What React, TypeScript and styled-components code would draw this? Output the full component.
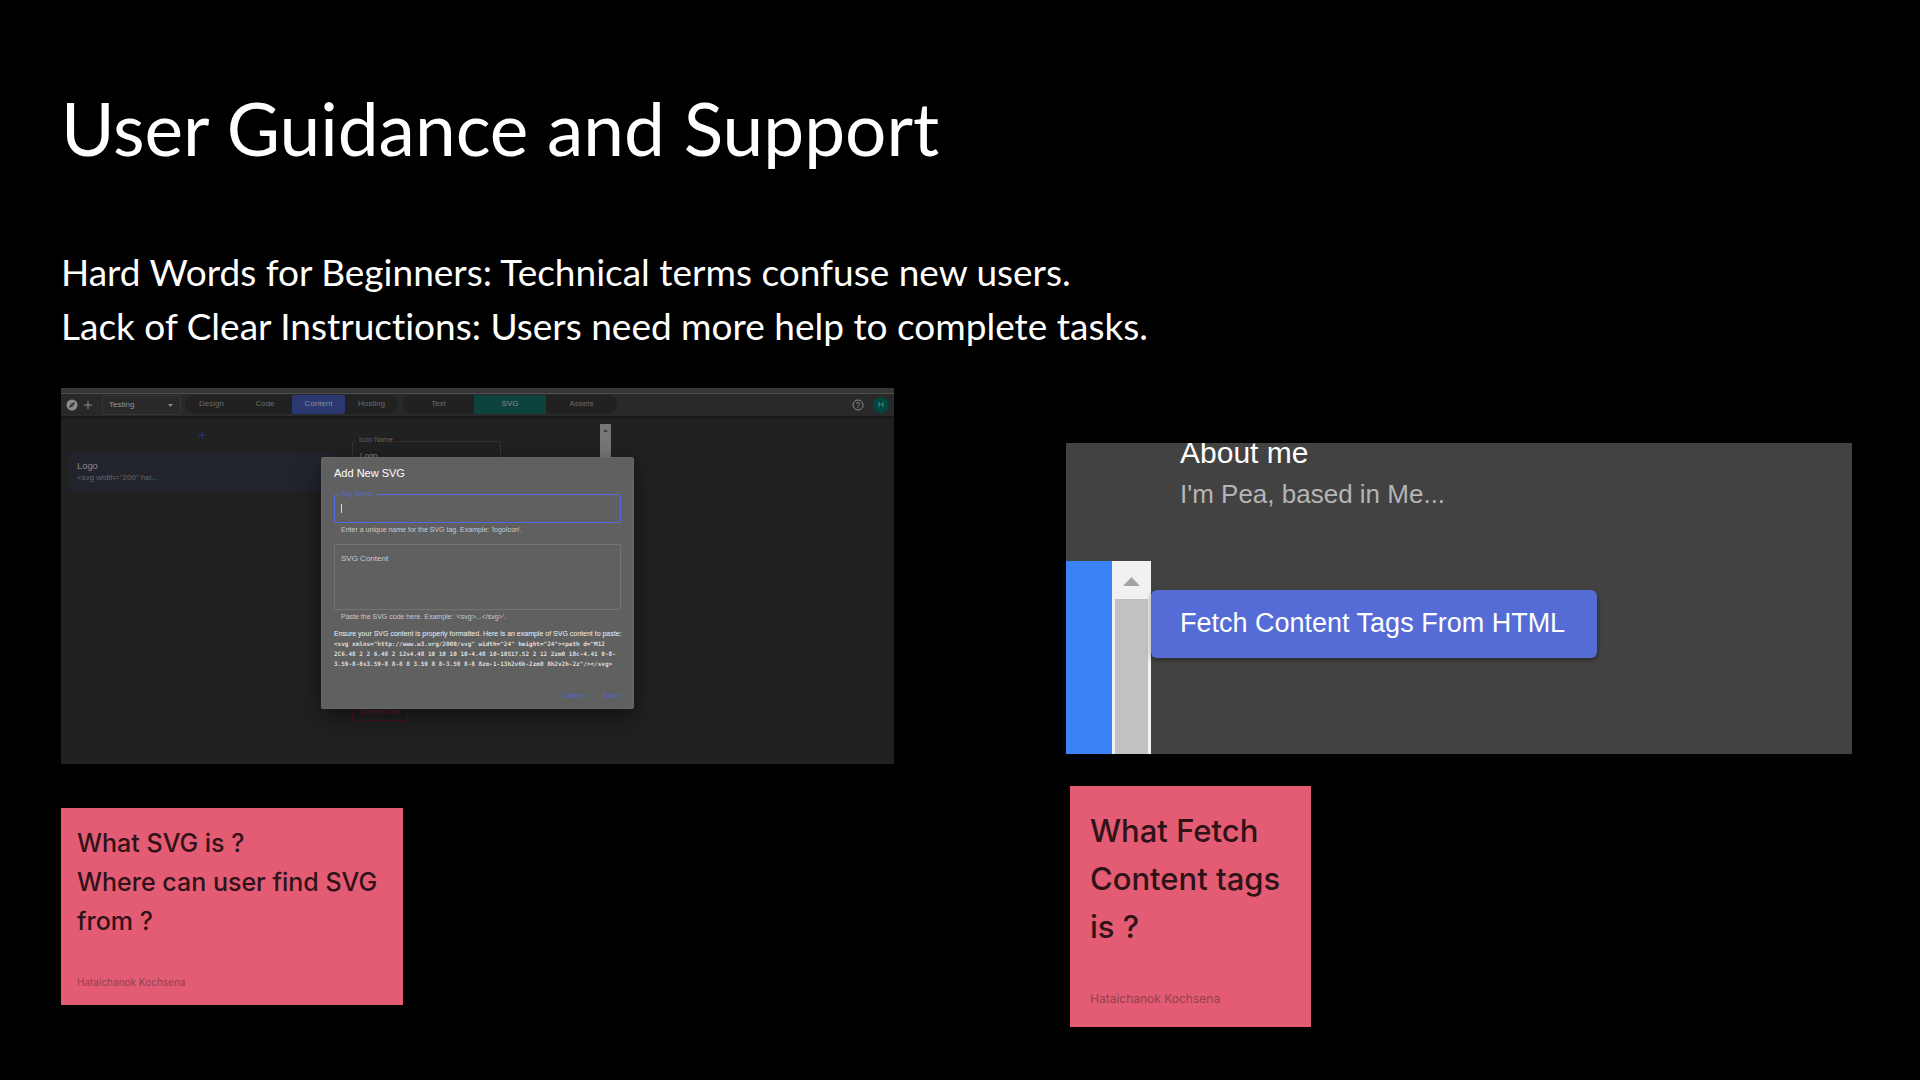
import React from "react";
import styled, { createGlobalStyle } from "styled-components";

const GlobalStyle = createGlobalStyle`
  *, *::before, *::after { box-sizing: border-box; }
  body { margin: 0; background: #000; }
  h1, h2, h3, p { margin: 0; font-weight: 400; }
  button, input, select, textarea { font: inherit; margin: 0; }
`;

const sans = '"Liberation Sans", Arial, sans-serif';

const Slide = styled.main`
  min-height: 100vh;
  padding: 84px 68px 48px 61px;
  background: #000;
  color: #fff;
  font-family: Inter, sans-serif;
`;

const Title = styled.h1`
  font-family: Lato, sans-serif;
  font-size: 73px;
  line-height: 88px;
`;

const Findings = styled.div`
  margin-top: 73px;
  font-family: Lato, sans-serif;
  font-size: 37px;
  font-variant-ligatures: none;
  line-height: 54px;
`;

const Columns = styled.div`
  display: grid;
  grid-template-columns: 833fr 786fr;
  column-gap: 172px;
  align-items: start;
  margin-top: 35px;
`;

const Column = styled.section<{ $top: number; $gap: number }>`
  display: flex;
  flex-direction: column;
  gap: ${(p) => p.$gap}px;
  padding-top: ${(p) => p.$top}px;
`;

const Note = styled.article<{ $large?: boolean }>`
  display: flex;
  flex-direction: column;
  justify-content: space-between;
  width: ${(p) => (p.$large ? 241 : 342)}px;
  min-height: ${(p) => (p.$large ? 241 : 197)}px;
  margin-left: ${(p) => (p.$large ? 4 : 0)}px;
  padding: ${(p) => (p.$large ? "21px 20px 20px" : "16px 16px 15px")};
  background: #e35c73;
  color: #301219;
  font-size: ${(p) => (p.$large ? 31 : 25)}px;
  font-weight: 500;
  line-height: ${(p) => (p.$large ? 48 : 39)}px;

  p {
    font-weight: inherit;
  }
`;

const Author = styled.footer<{ $large?: boolean }>`
  color: #933f4e;
  font-size: ${(p) => (p.$large ? 12 : 10)}px;
  font-weight: 400;
  line-height: 16px;
`;

/* Website builder preview */

const Builder = styled.div`
  position: relative;
  aspect-ratio: 833 / 376;
  overflow: hidden;
  background: #212121;
  color: #858585;
  font-family: ${sans};
  font-size: 8px;
  line-height: 12px;
`;

const WindowEdge = styled.div`
  height: 6px;
  background: #373737;
  border-bottom: 1px solid #565656;
`;

const Toolbar = styled.header`
  display: flex;
  align-items: center;
  height: 22px;
  padding: 0 5px;
  background: #292929;
  box-shadow: 0 1px 3px rgba(0, 0, 0, 0.5);
`;

const IconButton = styled.button`
  display: grid;
  place-items: center;
  width: 12px;
  height: 12px;
  margin-right: 4px;
  padding: 0;
  border: 0;
  background: none;
  color: #8c8c8c;
`;

const ProjectSelect = styled.div`
  position: relative;
  width: 79px;
  height: 20px;
  margin: 0 4px 0 4px;

  select {
    width: 100%;
    height: 100%;
    padding: 0 6px;
    appearance: none;
    border: 1px solid #363636;
    border-radius: 2px;
    background: transparent;
    color: #959595;
  }

  svg {
    position: absolute;
    right: 8px;
    top: 9px;
  }
`;

const TabGroup = styled.nav`
  display: flex;
  height: 19px;
  margin: 0 5px 2px 0;
  overflow: hidden;
  border-radius: 10px;
  background: #212121;
`;

const Tab = styled.button<{ $width: number; $fill?: string }>`
  width: ${(p) => p.$width}px;
  padding: 0;
  border: 0;
  border-radius: ${(p) => (p.$width < 60 ? 2 : 0)}px;
  background: ${(p) => p.$fill ?? "transparent"};
  color: ${(p) => (p.$fill ? "#868c96" : "#6b6b6b")};
`;

const Spacer = styled.div`
  flex: 1;
`;

const Avatar = styled.button`
  width: 16px;
  height: 16px;
  margin-left: 5px;
  padding: 0;
  border: 0;
  border-radius: 50%;
  background: #00473f;
  color: #78908c;
`;

const Workspace = styled.div`
  display: flex;
  align-items: flex-start;
  padding: 8px;
`;

const TagList = styled.div`
  display: flex;
  flex-direction: column;
  align-items: center;
  width: 266px;
  padding-top: 5px;
`;

const AddTag = styled(IconButton)`
  margin: 0 0 12px;
  color: #2b3774;
`;

const TagCard = styled.div`
  width: 100%;
  height: 38px;
  padding: 7px 8px;
  background: #22242d;
  color: #898989;

  p {
    color: #656669;
  }
`;

const Editor = styled.div`
  display: flex;
  flex-direction: column;
  justify-content: space-between;
  align-items: flex-start;
  width: 248px;
  height: 297px;
  padding: 17px 0 0 17px;
`;

const IconField = styled.div`
  position: relative;
  width: 149px;

  label {
    position: absolute;
    top: -7px;
    left: 4px;
    padding: 0 3px;
    background: #212121;
    color: #626262;
    font-size: 7px;
  }

  input {
    width: 100%;
    height: 28px;
    padding: 0 7px;
    border: 1px solid #343434;
    border-radius: 2px;
    background: transparent;
    color: #8a8a8a;
  }
`;

const DeleteButton = styled.button`
  width: 56px;
  height: 19px;
  padding: 0;
  border: 1px solid #4e1622;
  border-radius: 2px;
  background: transparent;
  color: #761c2e;
`;

const MiniScrollbar = styled.div`
  display: flex;
  justify-content: center;
  width: 11px;
  height: 230px;
  margin-left: 17px;
  padding-top: 5px;
  background: #777;
`;

const Dialog = styled.form`
  position: absolute;
  top: 69px;
  left: 260px;
  width: 313px;
  height: 252px;
  padding: 9px 12px;
  border: 1px solid #666;
  border-radius: 2px;
  background: #606060;
  box-shadow: 0 8px 24px rgba(0, 0, 0, 0.5);
  color: #d4d4d4;
  font-size: 7px;
  line-height: 10px;
`;

const DialogTitle = styled.h2`
  color: #fff;
  font-size: 11px;
  line-height: 13px;
`;

const FieldHint = styled.p`
  padding: 2px 7px 0;
  color: #c9c9c9;
`;

const TagField = styled.div`
  position: relative;
  margin-top: 14px;

  label {
    position: absolute;
    top: -5px;
    left: 4px;
    padding: 0 3px;
    background: #606060;
    color: #5269d3;
  }

  input {
    display: block;
    width: 100%;
    height: 29px;
    padding: 0 7px;
    border: 1px solid #526be0;
    border-radius: 2px;
    outline: 0;
    background: transparent;
    color: #fff;
  }
`;

const TextCursor = styled.span`
  position: absolute;
  top: 10px;
  left: 7px;
  width: 1px;
  height: 9px;
  background: #d8d8d8;
`;

const ContentField = styled.div`
  margin-top: 9px;

  textarea {
    display: block;
    width: 100%;
    height: 66px;
    padding: 8px 6px;
    resize: none;
    border: 1px solid #747474;
    border-radius: 2px;
    background: transparent;
    font-size: 8px;
    line-height: 12px;
  }

  textarea::placeholder {
    color: #c9c9c9;
  }
`;

const Example = styled.p`
  margin-top: 7px;
  color: #f0f0f0;
  white-space: nowrap;

  code {
    display: block;
    font-family: "DejaVu Sans Mono", monospace;
    font-size: 6px;
    font-weight: 700;
    color: #dedede;
  }
`;

const DialogActions = styled.div`
  display: flex;
  justify-content: flex-end;
  gap: 16px;
  margin-top: 21px;
`;

const TextButton = styled.button`
  padding: 0;
  border: 0;
  background: none;
  color: #4f66cc;
  font-size: 8px;
  line-height: 12px;
`;

/* Enlarged content-tag preview */

const Closeup = styled.div`
  display: flex;
  flex-direction: column;
  aspect-ratio: 786 / 311;
  overflow: hidden;
  background: #424242;
  font-family: ${sans};
`;

const TagSummary = styled.div`
  height: 118px;
  padding-left: 114px;

  h3 {
    margin-top: -4px;
    font-size: 30px;
    line-height: 28px;
  }

  p {
    margin-top: 7px;
    color: #b5b5b5;
    font-size: 26px;
    line-height: 40px;
  }
`;

const CloseupBody = styled.div`
  display: flex;
  flex: 1;
  align-items: flex-start;
`;

const BluePage = styled.div`
  align-self: stretch;
  width: 46px;
  background: #3b82f6;
`;

const Scrollbar = styled.div`
  display: flex;
  flex-direction: column;
  align-self: stretch;
  align-items: center;
  width: 39px;
  padding-top: 16px;
  background: #f1f1f1;
`;

const Thumb = styled.div`
  flex: 1;
  width: 33px;
  margin-top: 13px;
  background: #c1c1c1;
`;

const FetchButton = styled.button`
  height: 68px;
  margin-top: 29px;
  padding: 0 32px 2px 29px;
  border: 0;
  border-radius: 6px;
  background: #556cd6;
  box-shadow: 0 2px 5px rgba(0, 0, 0, 0.4);
  color: #fff;
  font-size: 27px;
`;

const PlusIcon = () => (
  <svg width="8" height="8" viewBox="0 0 8 8" stroke="currentColor">
    <path d="M4 0v8M0 4h8" />
  </svg>
);

const CompassIcon = () => (
  <svg width="12" height="12" viewBox="0 0 24 24" fill="currentColor">
    <path d="M12 1a11 11 0 1 0 0 22 11 11 0 0 0 0-22Zm2.4 13.4L6 18l3.600-8.400L18 6Z" />
    <circle cx="12" cy="12" r="1.400" />
  </svg>
);

const HelpIcon = () => (
  <svg width="12" height="12" viewBox="0 0 24 24" fill="none" stroke="currentColor" strokeWidth="2">
    <circle cx="12" cy="12" r="10" />
    <path d="M9 10a3 3 0 1 1 4.500 2.600C12.400 13.300 12 13.800 12 15M12 16.500v2" />
  </svg>
);

const Triangle = ({ width, height, color, down }: { width: number; height: number; color: string; down?: boolean }) => (
  <svg width={width} height={height} viewBox="0 0 10 5" preserveAspectRatio="none" fill={color}>
    <path d={down ? "M0 0h10L5 5Z" : "M0 5h10L5 0Z"} />
  </svg>
);

const BuilderPreview = () => (
  <Builder>
    <WindowEdge />
    <Toolbar>
      <IconButton aria-label="Explore"><CompassIcon /></IconButton>
      <IconButton aria-label="New project"><PlusIcon /></IconButton>
      <ProjectSelect>
        <select aria-label="Project" defaultValue="Testing"><option>Testing</option></select>
        <Triangle width={5} height={3} color="#8c8c8c" down />
      </ProjectSelect>
      <TabGroup>
        <Tab $width={53}>Design</Tab>
        <Tab $width={54}>Code</Tab>
        <Tab $width={53} $fill="#2c3872">Content</Tab>
        <Tab $width={53}>Hosting</Tab>
      </TabGroup>
      <TabGroup>
        <Tab $width={71}>Text</Tab>
        <Tab $width={72} $fill="#0e423d">SVG</Tab>
        <Tab $width={71}>Assets</Tab>
      </TabGroup>
      <Spacer />
      <IconButton aria-label="Help"><HelpIcon /></IconButton>
      <Avatar>H</Avatar>
    </Toolbar>
    <Workspace>
      <TagList>
        <AddTag aria-label="Add tag"><PlusIcon /></AddTag>
        <TagCard>
          <h3>Logo</h3>
          <p>&lt;svg width="200" hei...</p>
        </TagCard>
      </TagList>
      <Editor>
        <IconField>
          <label htmlFor="icon-name">Icon Name</label>
          <input id="icon-name" defaultValue="Logo" />
        </IconField>
        <DeleteButton>Delete Icon</DeleteButton>
      </Editor>
      <MiniScrollbar><Triangle width={5} height={3} color="#444" /></MiniScrollbar>
    </Workspace>
    <Dialog onSubmit={(event) => event.preventDefault()}>
      <DialogTitle>Add New SVG</DialogTitle>
      <TagField>
        <label htmlFor="tag-name">Tag Name</label>
        <input id="tag-name" />
        <TextCursor />
      </TagField>
      <FieldHint>Enter a unique name for the SVG tag. Example: 'logoIcon'.</FieldHint>
      <ContentField>
        <textarea aria-label="SVG Content" placeholder="SVG Content" />
      </ContentField>
      <FieldHint>Paste the SVG code here. Example: '&lt;svg&gt;...&lt;/svg&gt;'.</FieldHint>
      <Example>
        Ensure your SVG content is properly formatted. Here is an example of SVG content to paste:
        <code>&lt;svg xmlns="http://www.w3.org/2000/svg" width="24" height="24"&gt;&lt;path d="M12</code>
        <code>2C6.48 2 2 6.48 2 12s4.48 10 10 10 10-4.48 10-10S17.52 2 12 2zm0 18c-4.41 0-8-</code>
        <code>3.59-8-8s3.59-8 8-8 8 3.59 8 8-3.59 8-8 8zm-1-13h2v6h-2zm0 8h2v2h-2z"/&gt;&lt;/svg&gt;</code>
      </Example>
      <DialogActions>
        <TextButton type="button">Cancel</TextButton>
        <TextButton>Save</TextButton>
      </DialogActions>
    </Dialog>
  </Builder>
);

const FetchPreview = () => (
  <Closeup>
    <TagSummary>
      <h3>About me</h3>
      <p>I'm Pea, based in Me...</p>
    </TagSummary>
    <CloseupBody>
      <BluePage />
      <Scrollbar>
        <Triangle width={17} height={9} color="#a3a3a3" />
        <Thumb />
      </Scrollbar>
      <FetchButton>Fetch Content Tags From HTML</FetchButton>
    </CloseupBody>
  </Closeup>
);

export default function App() {
  return (
    <Slide>
      <GlobalStyle />
      <Title>User Guidance and Support</Title>
      <Findings>
        <p>Hard Words for Beginners: Technical terms confuse new users.</p>
        <p>Lack of Clear Instructions: Users need more help to complete tasks.</p>
      </Findings>
      <Columns>
        <Column $top={0} $gap={44}>
          <BuilderPreview />
          <Note>
            <div>
              <p>What SVG is ?</p>
              <p>Where can user find SVG from ?</p>
            </div>
            <Author>Hataichanok Kochsena</Author>
          </Note>
        </Column>
        <Column $top={55} $gap={32}>
          <FetchPreview />
          <Note $large>
            <p>What Fetch Content tags is ?</p>
            <Author $large>Hataichanok Kochsena</Author>
          </Note>
        </Column>
      </Columns>
    </Slide>
  );
}
